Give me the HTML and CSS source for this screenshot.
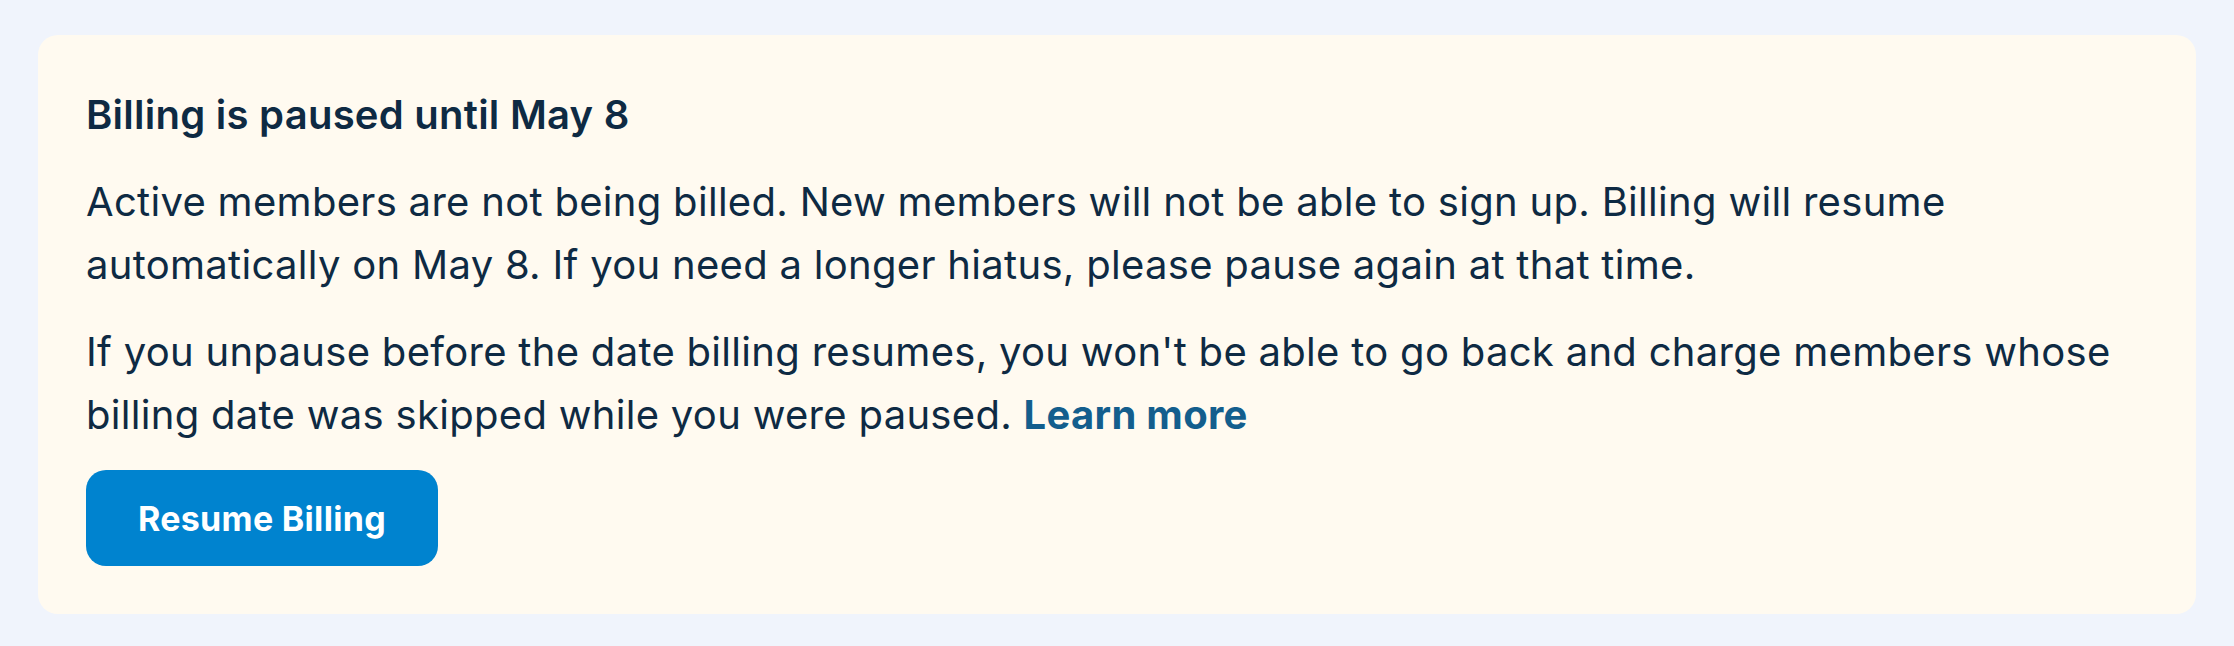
FILE: index.html
```html
<!DOCTYPE html>
<html lang="en">
<head>
<meta charset="utf-8">
<title>Billing paused</title>
<link rel="stylesheet" href="styles.css">
</head>
<body>
  <section class="notice">
    <h2 class="notice-title">Billing is paused until May 8</h2>
    <p class="notice-text">Active members are not being billed. New members will not be able to sign up. Billing will resume automatically on May 8. If you need a longer hiatus, please pause again at that time.</p>
    <p class="notice-text">If you unpause before the date billing resumes, you won't be able to go back and charge members whose billing date was skipped while you were paused. <a class="notice-link" href="#">Learn more</a></p>
    <div class="notice-actions">
      <button class="btn-primary" type="button">Resume Billing</button>
    </div>
  </section>
</body>
</html>
```

FILE: styles.css
```css
html, body {
  margin: 0;
  height: 100%;
}

body {
  background: #f0f4fc;
  padding: 35px 38px 0;
  box-sizing: border-box;
  font-family: Inter, "Noto Sans", "DejaVu Sans", sans-serif;
  color: #0e2a43;
  overflow: hidden;
}

.notice {
  background: #fffaf0;
  border-radius: 20px;
  padding: 48px;
  display: flex;
  flex-direction: column;
  gap: 24px;
}

.notice-title {
  margin: 0;
  font-size: 40px;
  line-height: 63px;
  font-weight: 600;
  letter-spacing: 0.25px;
}

.notice-text {
  margin: 0;
  font-size: 40px;
  line-height: 63px;
  font-weight: 400;
  letter-spacing: 0.3px;
}

.notice-link {
  color: #135e8d;
  font-weight: 700;
  text-decoration: none;
}

.notice-actions {
  display: flex;
}

.btn-primary {
  background: #0083cf;
  color: #ffffff;
  border: none;
  border-radius: 20px;
  height: 96px;
  padding: 0 52px;
  font-family: inherit;
  font-size: 34px;
  font-weight: 700;
  letter-spacing: 0.3px;
  cursor: pointer;
}
```
